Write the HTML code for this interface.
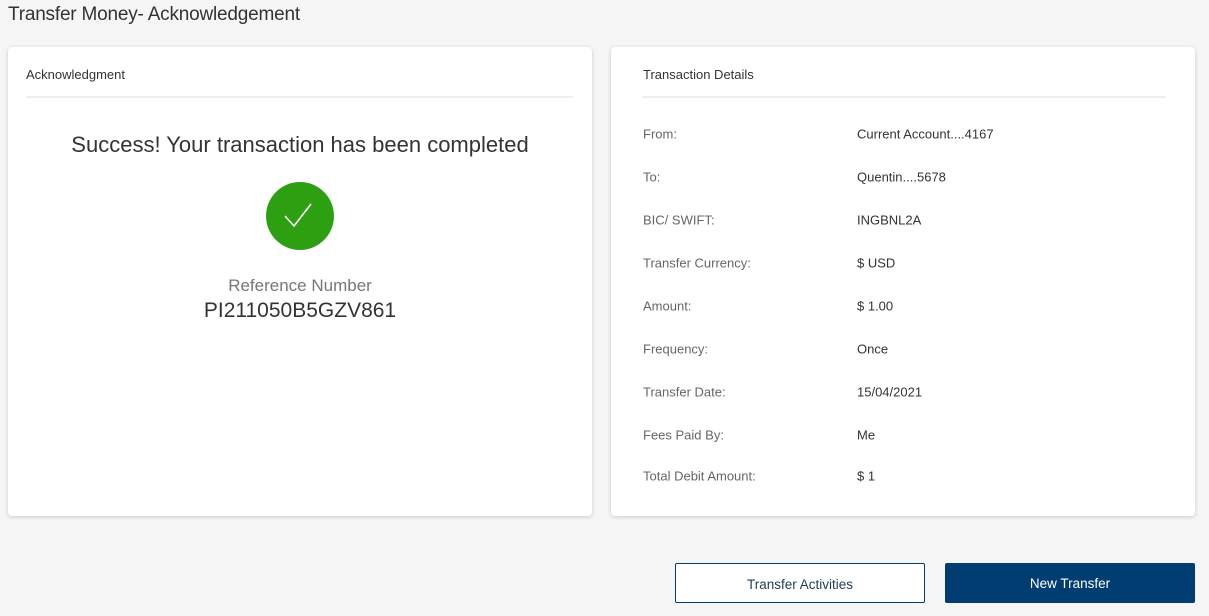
<!DOCTYPE html>
<html><head><style>
*{margin:0;padding:0;box-sizing:border-box}
body{width:1209px;height:616px;background:#f5f5f5;font-family:"Liberation Sans",sans-serif;position:relative;overflow:hidden;color:#333}
.t{position:absolute;left:8px;top:4px;font-size:19px;color:#333;letter-spacing:-0.2px}
.card{position:absolute;top:47px;width:584px;height:469px;background:#fff;border-radius:4px;box-shadow:0 1px 4px rgba(0,0,0,.18)}
.h{position:absolute;top:20px;font-size:13px;color:#333}
.line{position:absolute;top:49px;height:2px;background:#eee}
.a{position:absolute;font-size:13px;white-space:nowrap;transform:translateY(-50%)}
.lab{left:32px;color:#666}
.val{left:246px;color:#333}
.btn{position:absolute;top:563px;width:250px;height:40px;border-radius:2px;font-size:13.5px;text-align:center;line-height:41px}
</style></head><body>
<div class="t">Transfer Money- Acknowledgement</div>
<div class="card" style="left:8px">
 <div class="h" style="left:18px">Acknowledgment</div>
 <div class="line" style="left:18px;width:547px"></div>
 <div style="position:absolute;top:85px;width:100%;text-align:center;font-size:22px;color:#333">Success! Your transaction has been completed</div>
 <svg style="position:absolute;left:258px;top:135px" width="68" height="68"><circle cx="34" cy="34" r="34" fill="#2ca010"/><path d="M19 34 L28 44 L45 22" stroke="#fff" stroke-width="1.6" fill="none"/></svg>
 <div style="position:absolute;top:229px;width:100%;text-align:center;font-size:17px;color:#777">Reference Number</div>
 <div style="position:absolute;top:252px;width:100%;text-align:center;font-size:21px;color:#333">PI211050B5GZV861</div>
</div>
<div class="card" style="left:611px">
 <div class="h" style="left:32px">Transaction Details</div>
 <div class="line" style="left:31px;width:524px"></div>
 <div class="a lab" style="top:87px">From:</div><div class="a val" style="top:87px">Current Account....4167</div>
 <div class="a lab" style="top:130px">To:</div><div class="a val" style="top:130px">Quentin....5678</div>
 <div class="a lab" style="top:173px">BIC/ SWIFT:</div><div class="a val" style="top:173px">INGBNL2A</div>
 <div class="a lab" style="top:216px">Transfer Currency:</div><div class="a val" style="top:216px">$ USD</div>
 <div class="a lab" style="top:259px">Amount:</div><div class="a val" style="top:259px">$ 1.00</div>
 <div class="a lab" style="top:302px">Frequency:</div><div class="a val" style="top:302px">Once</div>
 <div class="a lab" style="top:345px">Transfer Date:</div><div class="a val" style="top:345px">15/04/2021</div>
 <div class="a lab" style="top:388px">Fees Paid By:</div><div class="a val" style="top:388px">Me</div>
 <div class="a lab" style="top:429px">Total Debit Amount:</div><div class="a val" style="top:429px">$ 1</div>
</div>
<div class="btn" style="left:675px;background:#fff;border:1px solid #003d73;color:#1f3d5c">Transfer Activities</div>
<div class="btn" style="left:945px;background:#003d73;color:#fff">New Transfer</div>
</body></html>
